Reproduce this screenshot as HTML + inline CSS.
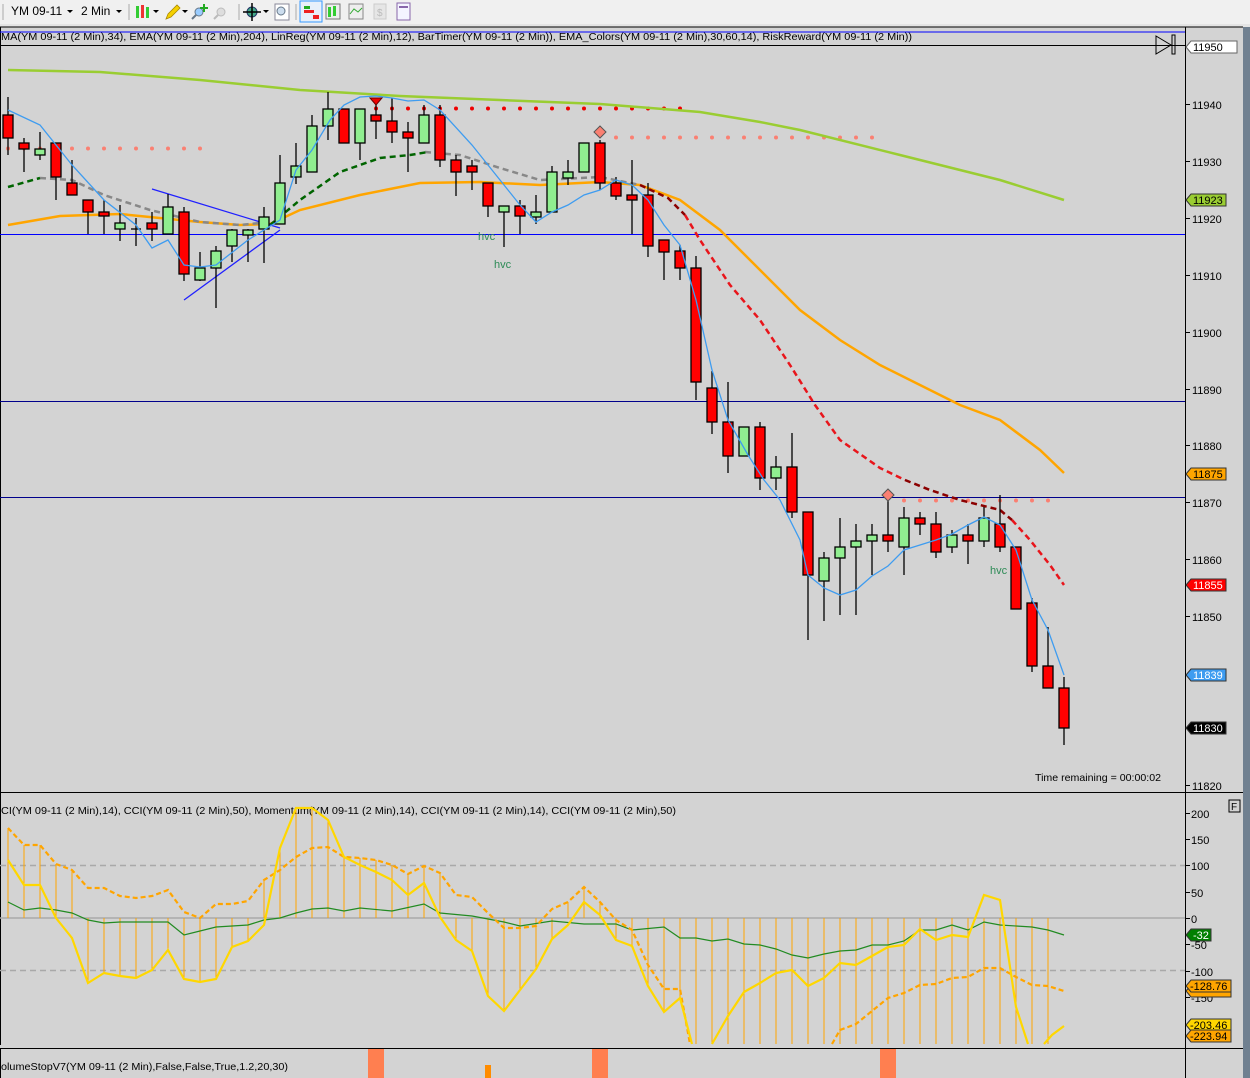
<!DOCTYPE html>
<html><head><meta charset="utf-8"><style>
html,body{margin:0;padding:0;width:1250px;height:1078px;overflow:hidden;background:#d3d3d3;font-family:"Liberation Sans",sans-serif}
svg{display:block}
</style></head><body>
<svg width="1250" height="1078" viewBox="0 0 1250 1078" xmlns="http://www.w3.org/2000/svg" font-family="Liberation Sans, sans-serif">
<rect x="0" y="0" width="1250" height="25" fill="#f0f0f0"/>
<rect x="0" y="24" width="1250" height="3" fill="#e4e4e4"/>
<line x1="3" y1="4" x2="3" y2="20" stroke="#aaa"/>
<text x="11" y="15" font-size="12" fill="#000">YM 09-11</text><path d="M67 10l3 3 3-3z" fill="#000"/>
<text x="81" y="15" font-size="12" fill="#000">2 Min</text><path d="M116 10l3 3 3-3z" fill="#000"/>
<line x1="129" y1="4" x2="129" y2="20" stroke="#aaa"/>
<rect x="136" y="6" width="3" height="12" fill="#3c3"/><rect x="141" y="5" width="3" height="13" fill="#e33"/><rect x="146" y="7" width="3" height="11" fill="#3c3"/>
<path d="M153 10l3 3 3-3z" fill="#000"/>
<path d="M166 19l2-5 9-9 3 3-9 9z" fill="#f5d000" stroke="#a80" stroke-width=".8"/><path d="M182 10l3 3 3-3z" fill="#000"/>
<circle cx="199" cy="12" r="4" fill="#9cf" stroke="#678"/><line x1="196" y1="15" x2="192" y2="19" stroke="#678" stroke-width="2"/><path d="M203 4h2v3h3v2h-3v3h-2v-3h-3v-2h3z" fill="#2a2"/>
<circle cx="221" cy="12" r="4" fill="#ddd" stroke="#bbb"/><line x1="218" y1="15" x2="214" y2="19" stroke="#bbb" stroke-width="2"/>
<line x1="239" y1="4" x2="239" y2="20" stroke="#aaa"/>
<circle cx="252" cy="12" r="5" fill="#4a8" stroke="#236"/><path d="M252 3v18M243 12h18" stroke="#000" stroke-width="1.5"/><path d="M263 10l3 3 3-3z" fill="#000"/>
<rect x="275" y="4" width="14" height="16" fill="#fff" stroke="#889"/><circle cx="281" cy="11" r="4" fill="#cde" stroke="#678"/>
<line x1="296" y1="4" x2="296" y2="20" stroke="#aaa"/>
<rect x="300" y="1" width="22" height="21" fill="#e8f0fa" stroke="#39f"/><rect x="304" y="6" width="6" height="3" fill="#2a2"/><rect x="304" y="10" width="10" height="3" fill="#e22"/><rect x="313" y="15" width="6" height="4" fill="#e22"/>
<rect x="326" y="4" width="14" height="15" fill="#eee" stroke="#777"/><rect x="328" y="7" width="3" height="10" fill="#3c3"/><rect x="333" y="6" width="3" height="10" fill="#3c3"/>
<rect x="349" y="4" width="14" height="15" fill="#eee" stroke="#888"/><path d="M350 14l4-5 4 3 4-4" stroke="#3a3" fill="none"/>
<rect x="374" y="4" width="12" height="15" fill="#e6e6e6" stroke="#ccc"/><text x="377" y="16" font-size="10" fill="#bbb">$</text>
<rect x="397" y="3" width="13" height="17" fill="#f4f4ff" stroke="#86a"/><rect x="399" y="6" width="9" height="2" fill="#86a"/>
<rect x="0" y="27" width="1185" height="1051" fill="#d3d3d3"/>
<rect x="1243" y="27" width="7" height="1051" fill="#708090"/>
<line x1="0" y1="27" x2="1243" y2="27" stroke="#000"/>
<line x1="1185.5" y1="27" x2="1185.5" y2="1078" stroke="#000"/>
<line x1="0.5" y1="27" x2="0.5" y2="1078" stroke="#000"/>
<line x1="0" y1="792.5" x2="1243" y2="792.5" stroke="#000"/>
<line x1="0" y1="1048.5" x2="1243" y2="1048.5" stroke="#000"/>
<line x1="0" y1="32" x2="1185" y2="32" stroke="#0000ff"/>
<line x1="0" y1="45.5" x2="1185" y2="45.5" stroke="#000"/>
<text x="1" y="40" font-size="10.5" fill="#000" textLength="911" lengthAdjust="spacingAndGlyphs">MA(YM 09-11  (2 Min),34), EMA(YM 09-11  (2 Min),204), LinReg(YM 09-11  (2 Min),12), BarTimer(YM 09-11  (2 Min)), EMA_Colors(YM 09-11  (2 Min),30,60,14), RiskReward(YM 09-11  (2 Min))</text>
<path d="M1156 36l15 9-15 9z" fill="none" stroke="#000"/><rect x="1172" y="35" width="3" height="19" fill="none" stroke="#000"/>
<line x1="0" y1="234.5" x2="1185" y2="234.5" stroke="#0000ff"/>
<line x1="0" y1="401.5" x2="1185" y2="401.5" stroke="#00008b"/>
<line x1="0" y1="497.5" x2="1185" y2="497.5" stroke="#00008b"/>
<line x1="8" y1="148.5" x2="202" y2="148.5" stroke="#fa8072" stroke-width="4" stroke-linecap="round" stroke-dasharray="0 16"/>
<line x1="376" y1="108.5" x2="682" y2="108.5" stroke="#e00" stroke-width="4" stroke-linecap="round" stroke-dasharray="0 16"/>
<line x1="616" y1="137.5" x2="876" y2="137.5" stroke="#fa8072" stroke-width="4" stroke-linecap="round" stroke-dasharray="0 16"/>
<line x1="904" y1="500.5" x2="1050" y2="500.5" stroke="#fa8072" stroke-width="4" stroke-linecap="round" stroke-dasharray="0 16"/>
<polyline fill="none" stroke="#9acd32" stroke-width="2.5" points="8,70 100,72 200,80 300,90 400,96 500,100 600,104 700,112 760,122 800,130 900,155 1000,180 1064,200"/>
<polyline fill="none" stroke="#ffa500" stroke-width="2.5" points="8,225 60,216 120,214 200,222 240,225 270,224 300,210 360,195 420,183 480,182 540,185 600,182 640,185 680,200 720,230 760,270 800,310 840,340 880,365 920,385 960,405 1000,420 1040,450 1064,473"/>
<polyline fill="none" stroke="#888" stroke-width="2.5" stroke-dasharray="6 4" points="40,178 72,180 104,195 150,210 200,222 240,225 270,222"/>
<polyline fill="none" stroke="#888" stroke-width="2.5" stroke-dasharray="6 4" points="425,152 460,155 500,168 540,180 600,177 640,185"/>
<polyline fill="none" stroke="#006400" stroke-width="2.5" stroke-dasharray="6 4" points="8,187 40,178"/>
<polyline fill="none" stroke="#006400" stroke-width="2.5" stroke-dasharray="6 4" points="270,225 300,200 340,172 380,158 410,155 428,152"/>
<polyline fill="none" stroke="#8b0000" stroke-width="2.5" stroke-dasharray="6 4" points="640,185 668,198 685,215"/>
<polyline fill="none" stroke="#e8151b" stroke-width="2.5" stroke-dasharray="6 4" points="685,215 700,240 730,285 760,320 790,365 815,405 840,440 880,468 905,480"/>
<polyline fill="none" stroke="#8b0000" stroke-width="2.5" stroke-dasharray="6 4" points="905,480 930,490 960,500 1000,510 1012,520"/>
<polyline fill="none" stroke="#e8151b" stroke-width="2.5" stroke-dasharray="6 4" points="1012,520 1030,540 1050,565 1064,585"/>
<line x1="152" y1="189" x2="280" y2="228" stroke="#2020ff" stroke-width="1.3"/>
<line x1="184" y1="300" x2="280" y2="230" stroke="#2020ff" stroke-width="1.3"/>
<g stroke="#000" stroke-width="1.3">
<line x1="8" y1="97" x2="8" y2="155"/><rect x="3" y="115" width="10" height="23" fill="#f00"/>
<line x1="24" y1="138" x2="24" y2="172"/><rect x="19" y="143" width="10" height="6" fill="#f00"/>
<line x1="40" y1="132" x2="40" y2="160"/><rect x="35" y="149" width="10" height="6" fill="#90ee90"/>
<line x1="56" y1="143" x2="56" y2="200"/><rect x="51" y="143" width="10" height="34" fill="#f00"/>
<line x1="72" y1="160" x2="72" y2="195"/><rect x="67" y="183" width="10" height="12" fill="#f00"/>
<line x1="88" y1="200" x2="88" y2="234"/><rect x="83" y="200" width="10" height="12" fill="#f00"/>
<line x1="104" y1="200" x2="104" y2="234"/><rect x="99" y="212" width="10" height="4" fill="#f00"/>
<line x1="120" y1="205" x2="120" y2="241"/><rect x="115" y="223" width="10" height="6" fill="#90ee90"/>
<line x1="136" y1="218" x2="136" y2="246"/><line x1="131" y1="229" x2="141" y2="229"/>
<line x1="152" y1="212" x2="152" y2="241"/><rect x="147" y="223" width="10" height="6" fill="#f00"/>
<line x1="168" y1="194" x2="168" y2="234"/><rect x="163" y="207" width="10" height="27" fill="#90ee90"/>
<line x1="184" y1="207" x2="184" y2="281"/><rect x="179" y="212" width="10" height="62" fill="#f00"/>
<line x1="200" y1="252" x2="200" y2="281"/><rect x="195" y="268" width="10" height="12" fill="#90ee90"/>
<line x1="216" y1="246" x2="216" y2="308"/><rect x="211" y="251" width="10" height="17" fill="#90ee90"/>
<line x1="232" y1="229" x2="232" y2="262"/><rect x="227" y="230" width="10" height="16" fill="#90ee90"/>
<line x1="248" y1="229" x2="248" y2="262"/><rect x="243" y="230" width="10" height="5" fill="#90ee90"/>
<line x1="264" y1="207" x2="264" y2="263"/><rect x="259" y="217" width="10" height="12" fill="#90ee90"/>
<line x1="280" y1="155" x2="280" y2="224"/><rect x="275" y="183" width="10" height="41" fill="#90ee90"/>
<line x1="296" y1="143" x2="296" y2="184"/><rect x="291" y="166" width="10" height="11" fill="#90ee90"/>
<line x1="312" y1="115" x2="312" y2="172"/><rect x="307" y="126" width="10" height="46" fill="#90ee90"/>
<line x1="328" y1="92" x2="328" y2="140"/><rect x="323" y="109" width="10" height="17" fill="#90ee90"/>
<line x1="344" y1="109" x2="344" y2="143"/><rect x="339" y="109" width="10" height="34" fill="#f00"/>
<line x1="360" y1="109" x2="360" y2="160"/><rect x="355" y="109" width="10" height="34" fill="#90ee90"/>
<line x1="376" y1="104" x2="376" y2="139"/><rect x="371" y="115" width="10" height="6" fill="#f00"/>
<line x1="392" y1="98" x2="392" y2="143"/><rect x="387" y="121" width="10" height="11" fill="#f00"/>
<line x1="408" y1="122" x2="408" y2="172"/><rect x="403" y="132" width="10" height="6" fill="#f00"/>
<line x1="424" y1="105" x2="424" y2="143"/><rect x="419" y="115" width="10" height="28" fill="#90ee90"/>
<line x1="440" y1="105" x2="440" y2="167"/><rect x="435" y="115" width="10" height="45" fill="#f00"/>
<line x1="456" y1="155" x2="456" y2="196"/><rect x="451" y="160" width="10" height="12" fill="#f00"/>
<line x1="472" y1="160" x2="472" y2="190"/><rect x="467" y="166" width="10" height="6" fill="#f00"/>
<line x1="488" y1="183" x2="488" y2="217"/><rect x="483" y="183" width="10" height="23" fill="#f00"/>
<line x1="504" y1="206" x2="504" y2="247"/><rect x="499" y="206" width="10" height="6" fill="#90ee90"/>
<line x1="520" y1="200" x2="520" y2="234"/><rect x="515" y="206" width="10" height="10" fill="#f00"/>
<line x1="536" y1="195" x2="536" y2="224"/><rect x="531" y="212" width="10" height="5" fill="#90ee90"/>
<line x1="552" y1="166" x2="552" y2="212"/><rect x="547" y="172" width="10" height="40" fill="#90ee90"/>
<line x1="568" y1="160" x2="568" y2="185"/><rect x="563" y="172" width="10" height="6" fill="#90ee90"/>
<line x1="584" y1="143" x2="584" y2="172"/><rect x="579" y="143" width="10" height="29" fill="#90ee90"/>
<line x1="600" y1="140" x2="600" y2="190"/><rect x="595" y="143" width="10" height="40" fill="#f00"/>
<line x1="616" y1="177" x2="616" y2="200"/><rect x="611" y="183" width="10" height="13" fill="#f00"/>
<line x1="632" y1="160" x2="632" y2="234"/><rect x="627" y="195" width="10" height="5" fill="#f00"/>
<line x1="648" y1="183" x2="648" y2="257"/><rect x="643" y="195" width="10" height="51" fill="#f00"/>
<line x1="664" y1="240" x2="664" y2="280"/><rect x="659" y="240" width="10" height="12" fill="#f00"/>
<line x1="680" y1="245" x2="680" y2="280"/><rect x="675" y="251" width="10" height="17" fill="#f00"/>
<line x1="696" y1="256" x2="696" y2="400"/><rect x="691" y="268" width="10" height="114" fill="#f00"/>
<line x1="712" y1="371" x2="712" y2="434"/><rect x="707" y="388" width="10" height="34" fill="#f00"/>
<line x1="728" y1="382" x2="728" y2="473"/><rect x="723" y="422" width="10" height="34" fill="#f00"/>
<line x1="744" y1="427" x2="744" y2="456"/><rect x="739" y="427" width="10" height="29" fill="#90ee90"/>
<line x1="760" y1="422" x2="760" y2="490"/><rect x="755" y="427" width="10" height="51" fill="#f00"/>
<line x1="776" y1="456" x2="776" y2="490"/><rect x="771" y="467" width="10" height="11" fill="#90ee90"/>
<line x1="792" y1="433" x2="792" y2="518"/><rect x="787" y="467" width="10" height="45" fill="#f00"/>
<line x1="808" y1="512" x2="808" y2="640"/><rect x="803" y="512" width="10" height="63" fill="#f00"/>
<line x1="824" y1="552" x2="824" y2="621"/><rect x="819" y="558" width="10" height="23" fill="#90ee90"/>
<line x1="840" y1="518" x2="840" y2="615"/><rect x="835" y="547" width="10" height="11" fill="#90ee90"/>
<line x1="856" y1="524" x2="856" y2="615"/><rect x="851" y="541" width="10" height="6" fill="#90ee90"/>
<line x1="872" y1="524" x2="872" y2="575"/><rect x="867" y="535" width="10" height="6" fill="#90ee90"/>
<line x1="888" y1="497" x2="888" y2="552"/><rect x="883" y="535" width="10" height="6" fill="#f00"/>
<line x1="904" y1="507" x2="904" y2="575"/><rect x="899" y="518" width="10" height="29" fill="#90ee90"/>
<line x1="920" y1="512" x2="920" y2="535"/><rect x="915" y="518" width="10" height="6" fill="#f00"/>
<line x1="936" y1="512" x2="936" y2="558"/><rect x="931" y="524" width="10" height="28" fill="#f00"/>
<line x1="952" y1="530" x2="952" y2="553"/><rect x="947" y="535" width="10" height="12" fill="#90ee90"/>
<line x1="968" y1="524" x2="968" y2="564"/><rect x="963" y="535" width="10" height="6" fill="#f00"/>
<line x1="984" y1="507" x2="984" y2="547"/><rect x="979" y="518" width="10" height="23" fill="#90ee90"/>
<line x1="1000" y1="495" x2="1000" y2="552"/><rect x="995" y="524" width="10" height="23" fill="#f00"/>
<line x1="1016" y1="547" x2="1016" y2="609"/><rect x="1011" y="547" width="10" height="62" fill="#f00"/>
<line x1="1032" y1="598" x2="1032" y2="672"/><rect x="1027" y="603" width="10" height="63" fill="#f00"/>
<line x1="1048" y1="627" x2="1048" y2="688"/><rect x="1043" y="666" width="10" height="22" fill="#f00"/>
<line x1="1064" y1="677" x2="1064" y2="745"/><rect x="1059" y="688" width="10" height="40" fill="#f00"/>
</g>
<path d="M370 98h12l-6 7z" fill="#e00" stroke="#600"/>
<path d="M600 126l6 6-6 6-6-6z" fill="#fa8072" stroke="#555"/>
<path d="M888 489l6 6-6 6-6-6z" fill="#fa8072" stroke="#555"/>
<polyline fill="none" stroke="#3e9cf0" stroke-width="1.3" points="8,110 40,125 72,165 104,200 136,225 152,248 168,240 184,265 200,267 216,265 248,240 280,220 296,170 312,150 330,120 344,105 360,97 376,96 392,98 408,101 424,100 440,110 472,145 504,185 520,205 536,222 552,212 568,205 584,195 600,190 616,180 632,185 648,200 664,225 680,245 696,300 712,370 728,420 748,455 764,480 780,500 800,540 808,575 824,588 840,595 856,590 872,576 888,566 904,550 920,545 936,540 952,534 968,525 984,517 1000,525 1016,550 1032,600 1048,630 1064,675"/>
<text x="478" y="240" font-size="11" fill="#2e8b57">hvc</text>
<text x="494" y="268" font-size="11" fill="#2e8b57">hvc</text>
<text x="990" y="574" font-size="11" fill="#2e8b57">hvc</text>
<text x="1035" y="781" font-size="10.5" fill="#000" textLength="126" lengthAdjust="spacingAndGlyphs">Time remaining = 00:00:02</text>
<g stroke="#000"><line x1="1185" y1="104.5" x2="1190" y2="104.5"/><line x1="1185" y1="161.5" x2="1190" y2="161.5"/><line x1="1185" y1="218.5" x2="1190" y2="218.5"/><line x1="1185" y1="275.5" x2="1190" y2="275.5"/><line x1="1185" y1="332.5" x2="1190" y2="332.5"/><line x1="1185" y1="389.5" x2="1190" y2="389.5"/><line x1="1185" y1="445.5" x2="1190" y2="445.5"/><line x1="1185" y1="502.5" x2="1190" y2="502.5"/><line x1="1185" y1="559.5" x2="1190" y2="559.5"/><line x1="1185" y1="616.5" x2="1190" y2="616.5"/><line x1="1185" y1="785.5" x2="1190" y2="785.5"/></g>
<g font-size="11" fill="#000">
<text x="1192" y="109">11940</text><text x="1192" y="166">11930</text><text x="1192" y="223">11920</text><text x="1192" y="280">11910</text><text x="1192" y="337">11900</text><text x="1192" y="394">11890</text><text x="1192" y="450">11880</text><text x="1192" y="507">11870</text><text x="1192" y="564">11860</text><text x="1192" y="621">11850</text><text x="1192" y="790">11820</text>
</g>
<g font-size="11">
<path d="M1186 47l5-6h46v12h-46z" fill="#fff" stroke="#666"/><text x="1193" y="51" fill="#000">11950</text>
<path d="M1186 200l5-6h35v12h-35z" fill="#9acd32" stroke="#333"/><text x="1193" y="204" fill="#000">11923</text>
<path d="M1186 474l5-6h35v12h-35z" fill="#ffa500" stroke="#333"/><text x="1193" y="478" fill="#000">11875</text>
<path d="M1186 585l5-6h35v12h-35z" fill="#f00" stroke="#333"/><text x="1193" y="589" fill="#fff">11855</text>
<path d="M1186 675l5-6h35v12h-35z" fill="#3e9cf0" stroke="#333"/><text x="1193" y="679" fill="#fff">11839</text>
<path d="M1186 728l5-6h35v12h-35z" fill="#000" stroke="#333"/><text x="1193" y="732" fill="#fff">11830</text>
</g>
<text x="1" y="814" font-size="10.5" fill="#000" textLength="675" lengthAdjust="spacingAndGlyphs">CI(YM 09-11  (2 Min),14), CCI(YM 09-11  (2 Min),50), Momentum(YM 09-11  (2 Min),14), CCI(YM 09-11  (2 Min),14), CCI(YM 09-11  (2 Min),50)</text>
<rect x="1229" y="800" width="11" height="12" fill="none" stroke="#000"/><text x="1231" y="810" font-size="10" fill="#000">F</text>
<line x1="0" y1="865.5" x2="1185" y2="865.5" stroke="#a9a9a9" stroke-width="1.5" stroke-dasharray="6 4"/>
<line x1="0" y1="970.5" x2="1185" y2="970.5" stroke="#a9a9a9" stroke-width="1.5" stroke-dasharray="6 4"/>
<line x1="0" y1="918" x2="1185" y2="918" stroke="#a9a9a9" stroke-width="1.5"/>
<g stroke="#ffa500" stroke-width="1">
<path d="M8 918V828M24 918V845M40 918V845M56 918V864M72 918V870M88 918V983M104 918V973M120 918V976M136 918V978M152 918V970M168 918V950M184 918V979M200 918V982M216 918V979M232 918V947M248 918V941M264 918V880M280 918V848M296 918V808M312 918V808M328 918V820M344 918V857M360 918V858M376 918V860M392 918V865M408 918V874M424 918V866M440 918V873M456 918V940M472 918V951M488 918V996M504 918V1011M520 918V990M536 918V969M552 918V939M568 918V902M584 918V887M600 918V902M616 918V940M632 918V946M648 918V986M664 918V1012M680 918V998M696 918V1044M712 918V1044M728 918V1044M744 918V1044M760 918V1044M776 918V1044M792 918V1044M808 918V1044M824 918V1044M840 918V1044M856 918V1044M872 918V1044M888 918V1044M904 918V1044M920 918V1044M936 918V1044M952 918V1044M968 918V1044M984 918V1044M1000 918V1044M1016 918V1044M1032 918V1044M1048 918V1044"/>
</g>
<polyline fill="none" stroke="#228b22" stroke-width="1.2" points="8,902 24,910 40,908 56,910 72,913 88,920 104,923 120,922 168,922 184,935 200,931 216,927 248,925 264,920 280,918 296,913 312,909 328,908 344,911 360,908 392,911 424,904 440,913 472,916 504,922 520,926 552,921 584,924 616,924 632,930 664,927 680,938 696,938 712,941 728,939 744,944 760,945 776,949 792,955 808,958 824,954 840,951 856,950 872,945 888,945 904,941 920,930 936,930 952,925 968,930 984,922 1000,925 1032,927 1048,930 1064,935"/>
<polyline fill="none" stroke="#ffa500" stroke-width="2.2" stroke-dasharray="5 3" points="8,828 24,845 40,845 56,864 72,870 88,888 104,888 120,896 136,898 152,896 168,890 184,912 200,918 216,904 232,904 248,901 264,880 280,870 296,857 312,848 328,847 344,857 360,858 376,860 392,865 408,874 424,866 440,873 456,895 472,897 488,913 504,928 520,928 536,926 552,909 568,902 584,887 600,902 616,920 632,930 648,965 664,989 680,989 690,1044"/>
<polyline fill="none" stroke="#ffa500" stroke-width="2.2" stroke-dasharray="5 3" points="832,1044 840,1030 856,1024 872,1011 888,998 904,993 920,985 936,984 952,978 968,977 984,968 1000,968 1016,977 1032,985 1048,986 1064,991"/>
<polyline fill="none" stroke="#ffd700" stroke-width="2.2" points="8,860 24,885 40,885 56,918 72,938 88,983 104,973 120,976 136,978 152,970 168,950 184,979 200,982 216,979 232,947 248,941 264,925 280,848 296,808 312,808 328,820 344,857 360,865 376,872 392,880 408,895 424,883 440,917 456,940 472,951 488,996 504,1011 520,990 536,969 552,939 568,925 584,902 600,915 616,940 632,946 648,986 664,1012 680,998 692,1044"/>
<polyline fill="none" stroke="#ffd700" stroke-width="2.2" points="712,1044 728,1016 744,992 760,983 776,973 792,970 808,986 824,978 840,963 856,965 872,956 888,947 904,945 920,929 936,940 952,935 968,937 984,895 1000,900 1016,1007 1028,1044"/>
<polyline fill="none" stroke="#ffd700" stroke-width="2.2" points="1044,1044 1052,1035 1064,1026"/>
<rect x="0" y="1045" width="1185" height="3" fill="#d3d3d3"/>
<g stroke="#000"><line x1="1185" y1="813.5" x2="1190" y2="813.5"/><line x1="1185" y1="839.5" x2="1190" y2="839.5"/><line x1="1185" y1="865.5" x2="1190" y2="865.5"/><line x1="1185" y1="892.5" x2="1190" y2="892.5"/><line x1="1185" y1="918.5" x2="1190" y2="918.5"/><line x1="1185" y1="944.5" x2="1190" y2="944.5"/><line x1="1185" y1="971.5" x2="1190" y2="971.5"/><line x1="1185" y1="997.5" x2="1190" y2="997.5"/></g>
<g font-size="11" fill="#000">
<text x="1191" y="818">200</text><text x="1191" y="844">150</text><text x="1191" y="870">100</text><text x="1191" y="897">50</text><text x="1191" y="923">0</text><text x="1191" y="949">-50</text><text x="1191" y="976">-100</text><text x="1191" y="1002">-150</text>
</g>
<g font-size="11">
<path d="M1186 935l5-6h20v12h-20z" fill="#008000" stroke="#333"/><text x="1193" y="939" fill="#fff">-32</text>
<path d="M1186 991l5-6h40v12h-40z" fill="#ffa500" stroke="#333"/>
<path d="M1186 986l5-6h40v12h-40z" fill="#ffa500" stroke="#333"/><text x="1190" y="990" fill="#000">-128.76</text>
<path d="M1186 1025l5-6h40v12h-40z" fill="#ffd700" stroke="#333"/><text x="1190" y="1029" fill="#000">-203.46</text>
<path d="M1186 1036l5-6h40v12h-40z" fill="#ffa500" stroke="#333"/><text x="1190" y="1040" fill="#000">-223.94</text>
</g>
<rect x="368" y="1049" width="16" height="29" fill="#ff7f50"/>
<rect x="592" y="1049" width="16" height="29" fill="#ff7f50"/>
<rect x="880" y="1049" width="16" height="29" fill="#ff7f50"/>
<rect x="485" y="1065" width="6" height="13" fill="#ff8c00"/>
<text x="1" y="1070" font-size="10.5" fill="#000" textLength="287" lengthAdjust="spacingAndGlyphs">olumeStopV7(YM 09-11 (2 Min),False,False,True,1.2,20,30)</text>
</svg>
</body></html>
